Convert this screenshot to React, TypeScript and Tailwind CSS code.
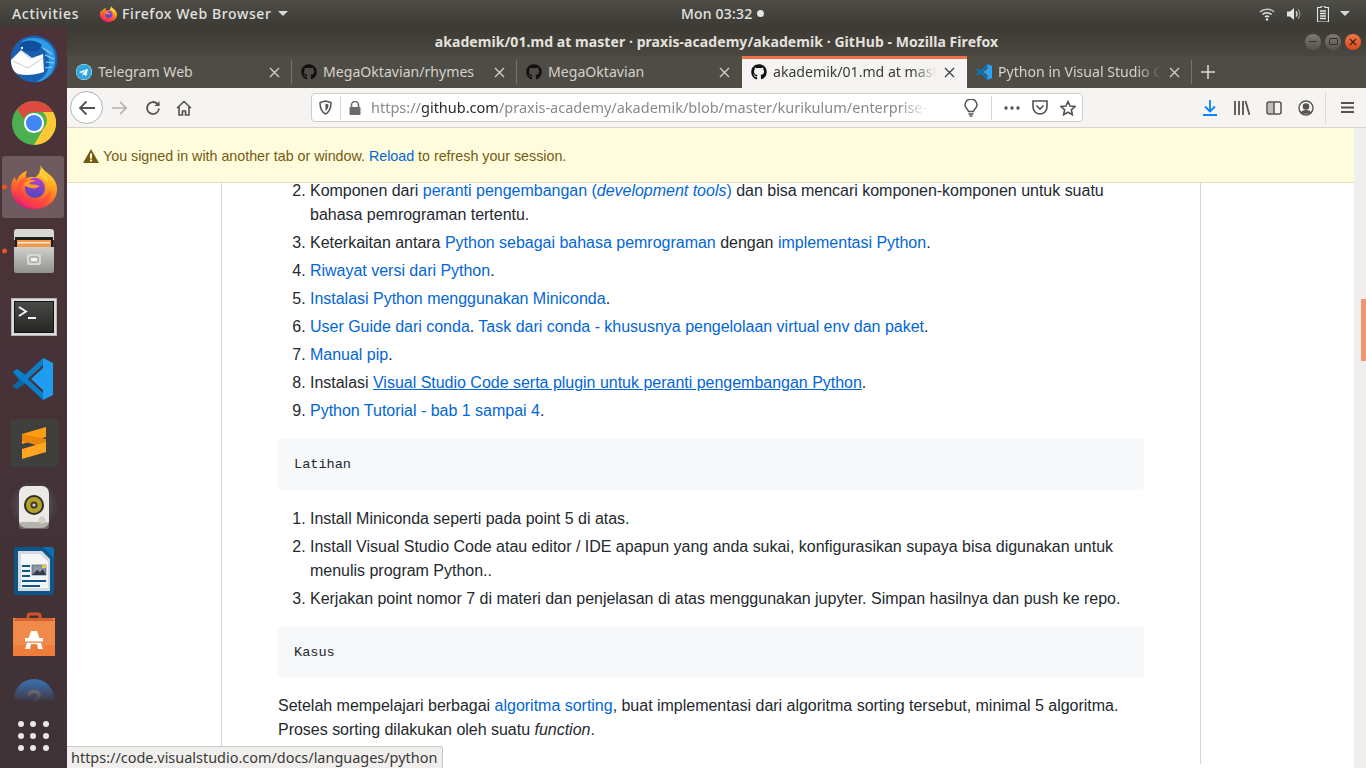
import { FaGithub, FaTelegram } from "react-icons/fa";

const uiFont = "font-['Noto_Sans',sans-serif]";
const link = "text-[#0366d6]";

function FirefoxLogo({ size }: { size: number }) {
  const id = `ff${size}`;
  return (
    <svg width={size} height={size} viewBox="0 0 48 48">
      <defs>
        <linearGradient id={`${id}a`} x1="0.8" y1="0" x2="0.35" y2="1">
          <stop offset="0" stopColor="#fff044" />
          <stop offset="0.4" stopColor="#ffa51f" />
          <stop offset="0.72" stopColor="#ff5a2e" />
          <stop offset="1" stopColor="#e6127f" />
        </linearGradient>
        <linearGradient id={`${id}b`} x1="0.5" y1="0" x2="0.4" y2="1">
          <stop offset="0" stopColor="#b13fd0" />
          <stop offset="1" stopColor="#4f46c0" />
        </linearGradient>
      </defs>
      <path
        d="M30 0c1 5 5 8 10 12 5 4 8 9 8 15 0 12-10 21-24 21C11 48 0 39 0 26c0-5 2-9 4-12 0 2 1 4 2 5 1-5 5-9 11-11-2 3-2 6-1 8 2-1 5-2 9-1 6-4 7-9 5-15z"
        fill={`url(#${id}a)`}
      />
      <path d="M7 23c1-5 5-8 11-9-2 3-1 5 0 7-4 0-6 2-7 5 2 9 9 14 17 13 7-1 12-6 13-12 2 9-6 20-17 20C13 47 5 35 7 23z" fill="#ff3f4a" opacity="0.55" />
      <circle cx="25" cy="26" r="10.5" fill={`url(#${id}b)`} />
      <path d="M13 22c3-4 8-6 13-3-4 0-6 1-7 3 3 1 7 0 11 2-3 2-6 3-9 2-3 0-6-2-8-4z" fill="#ff9a1f" />
      <path d="M30 7c4 3 9 8 9 15-2-5-5-7-9-9z" fill="#ffd53a" />
    </svg>
  );
}

function DockThunderbird() {
  return (
    <svg width="48" height="48" viewBox="0 0 48 48">
      <circle cx="24" cy="24" r="23.500" fill="#1a5fb0" />
      <path d="M11 7c8-7 25-6 32 7 5 10 2 24-8 30-2 1-6 3-9 3 8-4 13-10 13-20 0-6-3-12-9-15-6-3-13-2-19-5z" fill="#2f9be4" />
      <path d="M33 13l9 6M35 20l9 4M36 27l8 1M35 33l7-1" stroke="#8fd0f5" strokeWidth="1.100" />
      <path d="M11 8c6-4 15-3 21 2l-4 6-15 0c-3-2-4-5-2-8z" fill="#0f4f9c" />
      <circle cx="12" cy="13" r="1.200" fill="#dff" />
      <path d="M1 25 11 15l11 8 11-4 1 18c-9 3-18 4-26 2-5-2-7-8-7-14z" fill="#ffffff" />
      <path d="M3 26l15 7 15-10" fill="none" stroke="#b9bfc7" strokeWidth="0.800" />
      <path d="M11 16l10 8" fill="none" stroke="#b9bfc7" strokeWidth="0.800" />
    </svg>
  );
}

function DockChrome() {
  return (
    <svg width="44" height="44" viewBox="0 0 48 48">
      <circle cx="24" cy="24" r="24" fill="#4caf50" />
      <path d="M24 0a24 24 0 0 1 20.800 12H24a12 12 0 0 0-11.200 7.700L5.600 8.600A24 24 0 0 1 24 0z" fill="#dd4b3e" />
      <path d="M44.800 12A24 24 0 0 1 24 48l10.400-18a12 12 0 0 0-1-18z" fill="#fcc934" />
      <circle cx="24" cy="24" r="11" fill="#fff" />
      <circle cx="24" cy="24" r="8.800" fill="#4285f4" />
    </svg>
  );
}

function DockFiles() {
  return (
    <svg width="42" height="44" viewBox="0 0 42 44">
      <defs>
        <linearGradient id="cabinet" x1="0" y1="0" x2="0" y2="1">
          <stop offset="0" stopColor="#cfcfcd" />
          <stop offset="1" stopColor="#929290" />
        </linearGradient>
      </defs>
      <path d="M1 3q0-3 3-3h34q3 0 3 3v8H1z" fill="#d8d8d6" />
      <rect x="2" y="8" width="38" height="11" fill="#211e1b" />
      <rect x="4" y="11" width="34" height="8" fill="#ef9a4e" />
      <rect x="5" y="13" width="32" height="1.500" fill="#fbe6c8" />
      <path d="M1 18h40v24q0 2-2 2H3q-2 0-2-2z" fill="url(#cabinet)" />
      <rect x="14" y="25" width="14" height="11" rx="2" fill="#d7d7d5" />
      <rect x="17" y="28" width="8" height="5" rx="0.500" fill="#f4f4f2" stroke="#6e6e6c" strokeWidth="0.800" />
    </svg>
  );
}

function DockTerminal() {
  return (
    <svg width="46" height="38" viewBox="0 0 46 38">
      <defs>
        <linearGradient id="termbg" x1="0" y1="0" x2="0" y2="1">
          <stop offset="0" stopColor="#4a4a48" />
          <stop offset="1" stopColor="#262624" />
        </linearGradient>
      </defs>
      <rect x="0.500" y="0.500" width="45" height="37" fill="#dcdcda" stroke="#b5b5b3" />
      <rect x="3.500" y="3.500" width="39" height="31" fill="url(#termbg)" stroke="#111" />
      <path d="M8 9l7 4.500-7 4.500" fill="none" stroke="#f2f2f2" strokeWidth="2" />
      <rect x="17" y="19" width="8" height="2" fill="#f2f2f2" />
    </svg>
  );
}

function DockVsCode() {
  return (
    <svg width="44" height="44" viewBox="0 0 44 44">
      <path d="M1 15 5 12l9 6-6 6z" fill="#0e75b8" />
      <path d="M1 29l4 3L31 8V1z" fill="#0e7ec6" />
      <path d="M1 29l4 3 9-6-6-4z" fill="#0b68a8" />
      <path d="M5 12l26 24v7L1 15z" fill="#0a80cc" />
      <path d="M31 1v10L19 22l12 11v10l10-5V6z" fill="#1f9cf0" />
    </svg>
  );
}

function DockSublime() {
  return (
    <div className="flex h-12 w-12 items-center justify-center rounded-[3px] bg-[#3f3f3d]">
      <svg width="24" height="32" viewBox="0 0 24 32">
        <path d="M24 0v10L0 17V7z" fill="#ff9d12" />
        <path d="M0 14l24 7v-9L0 7z" fill="#e8860d" />
        <path d="M24 15v10L0 32V22z" fill="#ffa51f" />
      </svg>
    </div>
  );
}

function DockRhythmbox() {
  return (
    <svg width="48" height="48" viewBox="0 0 48 48">
      <circle cx="24" cy="22" r="23" fill="#6f86a8" opacity="0.1" />
      <circle cx="24" cy="22" r="19" fill="#6f86a8" opacity="0.14" />
      <rect x="9" y="3" width="30" height="42" rx="7" fill="#eceae4" />
      <rect x="9" y="39" width="30" height="7" rx="3" fill="#8f8d87" opacity="0.6" />
      <circle cx="24" cy="22" r="10" fill="#2f2d28" />
      <circle cx="24" cy="22" r="8" fill="#b4a12a" />
      <circle cx="24" cy="22" r="3.500" fill="#3b372c" />
      <circle cx="24" cy="22" r="1.600" fill="#d8d6cc" />
      <circle cx="32" cy="37" r="3.500" fill="#d2d0ca" />
    </svg>
  );
}

function DockWriter() {
  return (
    <svg width="40" height="48" viewBox="0 0 40 48">
      <path d="M3 0h26l11 11v33q0 4-4 4H3q-3 0-3-4V3q0-3 3-3z" fill="#0c5689" />
      <path d="M29 0h8q3 0 3 3v9z" fill="#0f6eb0" />
      <path d="M4 4h24l8 8v32H4z" fill="#d5d9dd" />
      <path d="M7 7h19l8 8v26H7z" fill="#f5f6f7" />
      <rect x="8" y="18" width="8" height="2" fill="#0c5689" />
      <rect x="8" y="23" width="8" height="2" fill="#0c5689" />
      <rect x="8" y="28" width="8" height="2" fill="#0c5689" />
      <rect x="8" y="33" width="24" height="2" fill="#0c5689" />
      <rect x="8" y="38" width="18" height="2" fill="#0c5689" />
      <rect x="18" y="18" width="14" height="10" fill="#8d99a5" stroke="#3b4c5c" strokeWidth="0.600" />
      <path d="M18 28l5-5 3 2 3-3 3 6z" fill="#2f3d4c" />
      <rect x="28" y="18" width="4" height="3" fill="#e5c84a" />
    </svg>
  );
}

function DockSoftware() {
  return (
    <svg width="42" height="44" viewBox="0 0 42 44">
      <path d="M15 9V4q0-2 2-2h8q2 0 2 2v5" fill="none" stroke="#d2552a" strokeWidth="3" />
      <rect x="0" y="6" width="42" height="38" fill="#f08a4b" />
      <path d="M3 6h36l3 3H0z" fill="#d9622e" />
      <rect x="0" y="33" width="42" height="11" fill="#ef7c3a" />
      <path d="M18 19h6l6 18h-5l-1-5h-6l-1 5h-5z" fill="#fff" />
      <rect x="12" y="26" width="18" height="3.500" fill="#fff" />
      <rect x="14" y="29.500" width="14" height="1.200" fill="#ef7c3a" />
    </svg>
  );
}

function DockHelp() {
  return (
    <svg width="40" height="40" viewBox="0 0 40 40">
      <circle cx="20" cy="20" r="20" fill="#2f5587" />
      <path d="M0 20a20 20 0 0 1 40 0z" fill="#3b6aa4" />
      <text x="20" y="30" textAnchor="middle" fontSize="28" fontWeight="700" fontFamily="Liberation Sans" fill="#8e929c">?</text>
    </svg>
  );
}

function Dock() {
  const icons = [
    { el: <DockThunderbird />, shift: "" },
    { el: <DockChrome />, shift: "" },
    { el: <FirefoxLogo size={46} />, active: true, shift: "-mt-[2px]" },
    { el: <DockFiles />, running: true, shift: "-mt-[1px]" },
    { el: <DockTerminal />, shift: "mt-[4px]" },
    { el: <DockVsCode />, shift: "" },
    { el: <DockSublime />, shift: "" },
    { el: <DockRhythmbox />, shift: "" },
    { el: <DockWriter />, shift: "" },
    { el: <DockSoftware />, shift: "-mt-[2px]" },
    { el: <DockHelp />, shift: "" },
  ];
  return (
    <aside className="flex w-[67px] shrink-0 flex-col bg-gradient-to-b from-[#4d3339] to-[#3e3236]">
      <div className="h-[676px] overflow-hidden [mask-image:linear-gradient(to_bottom,black_97%,transparent)]">
        {icons.map((it, i) => (
          <div key={i} className="relative flex h-[64px] items-center justify-center">
            {it.active && <div className="absolute left-[2px] right-[3px] top-[1px] bottom-[1px] rounded-[3px] bg-[#6f5a5f]" />}
            {(it.active || it.running) && (
              <div className="absolute left-[2px] top-1/2 h-[5px] w-[5px] -translate-y-1/2 rounded-full bg-[#e95420]" />
            )}
            <div className={`relative flex ${it.shift}`}>{it.el}</div>
          </div>
        ))}
      </div>
      <div className="grid flex-1 grid-cols-3 content-center justify-items-center gap-y-[6px] px-[15px]">
        {Array.from({ length: 9 }).map((_, i) => (
          <span key={i} className="h-[6px] w-[6px] rounded-full bg-[#e8e6e6]" />
        ))}
      </div>
    </aside>
  );
}

function TopBar() {
  return (
    <header className={`flex h-[27px] shrink-0 items-center bg-gradient-to-b from-[#4f4d47] to-[#3c3a35] text-[14px] font-medium text-[#e2e3e0] ${uiFont}`}>
      <div className="flex w-[526px] items-center">
        <span className="ml-[12px] w-[88px] tracking-[0.7px]">Activities</span>
        <FirefoxLogo size={17} />
        <span className="ml-[5px] tracking-[0.62px]">Firefox Web Browser</span>
        <svg className="ml-[6px]" width="10" height="5" viewBox="0 0 10 5"><path d="M0 0h10L5 5z" fill="#d8d8d4" /></svg>
      </div>
      <div className="ml-[155px] flex items-center">
        <span className="tracking-[0.2px]">Mon 03:32</span>
        <span className="ml-[5px] h-[7px] w-[7px] rounded-full bg-[#e4e4e0]" />
      </div>
      <div className="ml-auto mr-[16px] flex items-center">
        <svg width="16" height="14" viewBox="0 0 16 14" fill="none" stroke="#e4e4e0" strokeWidth="1.500">
          <path d="M1 5a10 10 0 0 1 14 0" opacity="0.8" />
          <path d="M3.500 7.500a6.500 6.500 0 0 1 9 0" />
          <path d="M6 10a3 3 0 0 1 4 0" />
          <circle cx="8" cy="12.500" r="1.200" fill="#e4e4e0" stroke="none" />
        </svg>
        <svg className="ml-[12px]" width="16" height="14" viewBox="0 0 16 14" fill="none">
          <path d="M0 4.500h3L7 1v12L3 9.500H0z" fill="#e4e4e0" />
          <path d="M9 4.500a3.500 3.500 0 0 1 0 5" stroke="#e4e4e0" strokeWidth="1.300" />
          <path d="M11 2.500a6.500 6.500 0 0 1 0 9" stroke="#8f8d87" strokeWidth="1.300" />
        </svg>
        <svg className="ml-[14px]" width="12" height="16" viewBox="0 0 12 16" fill="none">
          <path d="M4 0h4v1.500h3.500V16H.5V1.500H4z" fill="none" stroke="#e4e4e0" strokeWidth="1.200" />
          <path d="M3 5h6M3 7.500h6M3 10h6M3 12.500h6" stroke="#e4e4e0" strokeWidth="1.300" />
        </svg>
        <svg className="ml-[11px]" width="10" height="5" viewBox="0 0 10 5"><path d="M0 0h10L5 5z" fill="#d8d8d4" /></svg>
      </div>
    </header>
  );
}

function TitleBar() {
  return (
    <div className={`flex h-[29px] shrink-0 items-center bg-gradient-to-b from-[#3d3a35] to-[#4a4740] text-[14px] font-bold text-[#e4e2dd] ${uiFont}`}>
      <div className="flex-1 pl-[61px] text-center tracking-[0.065px]">akademik/01.md at master · praxis-academy/akademik · GitHub - Mozilla Firefox</div>
      <div className="mr-[5px] flex items-center gap-[4px]">
        <span className="flex h-[16px] w-[16px] items-center justify-center rounded-full bg-gradient-to-b from-[#7d7b75] to-[#55534d]">
          <span className="h-[1px] w-[8px] bg-[#35332f]" />
        </span>
        <span className="flex h-[16px] w-[16px] items-center justify-center rounded-full bg-gradient-to-b from-[#7d7b75] to-[#55534d]">
          <span className="h-[7px] w-[9px] rounded-[1px] border border-[#35332f]" />
        </span>
        <span className="flex h-[16px] w-[16px] items-center justify-center rounded-full bg-gradient-to-b from-[#f0764a] to-[#d9481c] text-[#3a2015]">
          <svg width="8" height="8" viewBox="0 0 8 8"><path d="M1 1l6 6M7 1L1 7" stroke="#3a2015" strokeWidth="1.200" /></svg>
        </span>
      </div>
    </div>
  );
}

function VsCodeTab() {
  return (
    <svg width="16" height="16" viewBox="0 0 16 16">
      <path d="M0 5.500 1.500 4.500l10 8.500V16z" fill="#0a78c8" />
      <path d="M0 10.500l1.500 1L11.500 3V0z" fill="#0a78c8" />
      <path d="M11.500 0 16 2v12l-4.500 2V11L7 8l4.500-3z" fill="#2aa3f0" />
    </svg>
  );
}

const Close = ({ color = "#cfcdc8" }: { color?: string }) => (
  <svg width="11" height="11" viewBox="0 0 11 11"><path d="M1 1l9 9M10 1l-9 9" stroke={color} strokeWidth="1.400" /></svg>
);

function Tab({ icon, title, active, sep, fade }: { icon: React.ReactNode; title: string; active?: boolean; sep?: boolean; fade?: boolean }) {
  return (
    <div className={`relative flex h-full w-[225px] shrink-0 items-center pl-[9px] pr-[12px] ${active ? "border-t-[3px] border-[#f0714a] bg-[#f5f4f2] pb-[3px] text-[#3b3a37]" : "text-[#d4d2cc]"}`}>
      <span className="flex w-[16px] shrink-0">{icon}</span>
      <span
        className={`ml-[6px] flex-1 overflow-hidden whitespace-nowrap text-[14.1px] ${fade ? "[mask-image:linear-gradient(to_right,black_86%,transparent)]" : ""}`}
      >
        {title}
      </span>
      <span className="ml-[8px] flex"><Close color={active ? "#444" : "#cfcdc8"} /></span>
      {sep && <span className="absolute right-0 top-[4px] h-[24px] w-[1px] bg-[#75736c]" />}
    </div>
  );
}

function TabStrip() {
  const gh = <FaGithub size={16} color="#111" />;
  return (
    <div className={`flex h-[32px] shrink-0 items-stretch bg-[#4f4c45] pr-[4px] ${uiFont}`}>
      <Tab icon={<FaTelegram size={16} color="#2ea6e0" className="rounded-full bg-white" />} title="Telegram Web" sep />
      <Tab icon={gh} title="MegaOktavian/rhymes" sep />
      <Tab icon={gh} title="MegaOktavian" />
      <Tab icon={gh} title="akademik/01.md at master · praxis-academy" active fade />
      <Tab icon={<VsCodeTab />} title="Python in Visual Studio Code" sep fade />
      <svg className="ml-[9px] self-center" width="14" height="14" viewBox="0 0 14 14"><path d="M7 0v14M0 7h14" stroke="#dedcd7" strokeWidth="1.500" /></svg>
    </div>
  );
}

function Toolbar() {
  const c = "#55534f";
  return (
    <div className={`flex h-[40px] shrink-0 items-center border-b border-[#d6d3cd] bg-[#f5f4f2] pl-[3px] ${uiFont}`}>
      <div className="flex h-[33px] w-[33px] items-center justify-center rounded-full border border-[#b4b2ae] bg-white">
        <svg width="18" height="16" viewBox="0 0 18 16" fill="none" stroke={c} strokeWidth="1.800"><path d="M17 8H2M8.500 1.500 2 8l6.500 6.500" /></svg>
      </div>
      <svg className="ml-[8px]" width="17" height="16" viewBox="0 0 18 16" fill="none" stroke="#b5b3af" strokeWidth="1.800"><path d="M1 8h15M9.500 1.500 16 8l-6.500 6.500" /></svg>
      <svg className="ml-[17px]" width="16" height="16" viewBox="0 0 16 16" fill="none" stroke={c} strokeWidth="1.800"><path d="M14 8.500a6 6 0 1 1-1.600-4.600L14 5.500" /><path d="M14.500 1v5h-5" fill={c} stroke="none" /></svg>
      <svg className="ml-[15px]" width="16" height="16" viewBox="0 0 16 16" fill="none" stroke={c} strokeWidth="1.600"><path d="M1 8l7-6.500L15 8M3 6.500V15h3.500v-4h3v4H13V6.500" /></svg>
      <div className="ml-[119px] flex h-[29px] w-[772px] items-center rounded-[4px] border border-[#cfccc7] bg-white">
        <svg className="ml-[7px]" width="13" height="15" viewBox="0 0 13 15" fill="none" stroke={c} strokeWidth="1.500"><path d="M6.500 1 12 2.500c0 6-1.500 9.500-5.500 11.500C2.500 12 1 8.500 1 2.500z" /><path d="M6.500 3.500 9.500 4.500c0 3-1 5-3 6.500z" fill={c} stroke="none" /></svg>
        <span className="ml-[8px] h-[24px] w-[1px] bg-[#d8d6d2]" />
        <svg className="ml-[8px]" width="12" height="14" viewBox="0 0 12 14"><path d="M2.500 6V4a3.500 3.500 0 0 1 7 0v2" fill="none" stroke="#6d6b67" strokeWidth="1.600" /><rect x="0.500" y="6" width="11" height="8" rx="1" fill="#6d6b67" /></svg>
        <div className="ml-[10px] flex-1 overflow-hidden whitespace-nowrap text-[14.5px] text-[#8b8985] [mask-image:linear-gradient(to_right,black_95%,transparent)]">
          https://<span className="text-[#2b2a28]">github.com</span>/praxis-academy/akademik/blob/master/kurikulum/enterprise-python/01.md
        </div>
        <svg className="ml-[36px]" width="14" height="18" viewBox="0 0 14 18" fill="none" stroke={c} strokeWidth="1.500"><path d="M4.500 12.500C4 10 1 9 1 6a6 6 0 0 1 12 0c0 3-3 4-3.500 6.500z" /><path d="M4.500 15h5M5.500 17h3" /></svg>
        <span className="ml-[13px] h-[24px] w-[1px] bg-[#d8d6d2]" />
        <svg className="ml-[12px]" width="16" height="4" viewBox="0 0 16 4" fill={c}><circle cx="2" cy="2" r="1.700" /><circle cx="8" cy="2" r="1.700" /><circle cx="14" cy="2" r="1.700" /></svg>
        <svg className="ml-[12px]" width="16" height="15" viewBox="0 0 16 15" fill="none" stroke={c} strokeWidth="1.600"><path d="M1 1h14v6a7 7 0 0 1-14 0z" /><path d="M4.500 5.500 8 9l3.500-3.500" /></svg>
        <svg className="ml-[12px] mr-[6px]" width="16" height="16" viewBox="0 0 16 16" fill="none" stroke={c} strokeWidth="1.600"><path d="M8 1.500 10 6l5 .5-3.700 3.300 1.100 4.900L8 12.200l-4.400 2.500 1.100-4.900L1 6.500 6 6z" /></svg>
      </div>
      <svg className="ml-[120px]" width="14" height="16" viewBox="0 0 14 16" fill="none" stroke="#0a84ff" strokeWidth="1.800"><path d="M7 0v11M2 6.500 7 11.500l5-5M0 15h14" /></svg>
      <svg className="ml-[17px]" width="16" height="14" viewBox="0 0 16 14" fill="none" stroke={c} strokeWidth="1.800"><path d="M1 0v14M5 0v14M9 0v14M11.500 0 15.500 14" /></svg>
      <svg className="ml-[16px]" width="16" height="14" viewBox="0 0 16 14" fill="none" stroke={c} strokeWidth="1.500"><rect x="1" y="1" width="14" height="12" rx="2" /><path d="M8 1v12" /><path d="M2 2h6v10H2z" fill={c} stroke="none" opacity="0.35" /></svg>
      <svg className="ml-[16px]" width="16" height="16" viewBox="0 0 16 16" fill="none" stroke={c} strokeWidth="1.400"><circle cx="8" cy="8" r="7" /><circle cx="8" cy="6.500" r="2.600" fill={c} /><path d="M3.500 13c1-3 8-3 9 0z" fill={c} /></svg>
      <span className="ml-[11px] h-[32px] w-[1px] bg-[#dcdad5]" />
      <svg className="ml-[15px]" width="13" height="11" viewBox="0 0 13 11" stroke={c} strokeWidth="1.800"><path d="M0 1h13M0 5.500h13M0 10h13" /></svg>
    </div>
  );
}

function Page() {
  return (
    <div className="relative flex min-h-0 flex-1 bg-white font-['Liberation_Sans',Arial,sans-serif] text-[16px] leading-[24px] tracking-[-0.015px] text-[#24292e]">
      <div className="flex min-w-0 flex-1 flex-col">
        <div className="relative z-10 flex h-[55px] shrink-0 items-center border-b border-[#e4e0bd] bg-[#fffbdd] pl-[16px] pt-[2px] text-[14.31px] text-[#735c0f]">
          <svg width="16" height="14" viewBox="0 0 16 14"><path d="M8 0 16 14H0z" fill="#735c0f" /><rect x="7" y="4.500" width="2" height="5" fill="#fffbdd" /><rect x="7" y="10.500" width="2" height="2" fill="#fffbdd" /></svg>
          <span className="ml-[4px]">You signed in with another tab or window. <span className={link}>Reload</span> to refresh your session.</span>
        </div>
        <div className="min-h-0 flex-1 overflow-hidden">
          <article className="ml-[154px] h-full w-[980px] border-x border-[#d1d5da] px-[56px]">
            <ol start={2} className="-mt-[4.4px] list-decimal pl-8">
              <li>
                Komponen dari <span className={link}>peranti pengembangan (<em>development tools</em>)</span> dan bisa mencari komponen-komponen untuk suatu bahasa pemrograman tertentu.
              </li>
              <li className="mt-1">
                Keterkaitan antara <span className={link}>Python sebagai bahasa pemrograman</span> dengan <span className={link}>implementasi Python</span>.
              </li>
              <li className="mt-1"><span className={link}>Riwayat versi dari Python</span>.</li>
              <li className="mt-1"><span className={link}>Instalasi Python menggunakan Miniconda</span>.</li>
              <li className="mt-1">
                <span className={link}>User Guide dari conda</span>. <span className={link}>Task dari conda - khususnya pengelolaan virtual env dan paket</span>.
              </li>
              <li className="mt-1"><span className={link}>Manual pip</span>.</li>
              <li className="mt-1">
                Instalasi <span className={`${link} underline`}>Visual Studio Code serta plugin untuk peranti pengembangan Python</span>.
              </li>
              <li className="mt-1"><span className={link}>Python Tutorial - bab 1 sampai 4</span>.</li>
            </ol>
            <pre className="mt-4 rounded-[3px] bg-[#f6f8fa] p-4 font-['Liberation_Mono',monospace] text-[13.6px] leading-[1.45]">Latihan</pre>
            <ol className="mt-[16.3px] list-decimal pl-8">
              <li>Install Miniconda seperti pada point 5 di atas.</li>
              <li className="mt-1">Install Visual Studio Code atau editor / IDE apapun yang anda sukai, konfigurasikan supaya bisa digunakan untuk menulis program Python..</li>
              <li className="mt-1">Kerjakan point nomor 7 di materi dan penjelasan di atas menggunakan jupyter. Simpan hasilnya dan push ke repo.</li>
            </ol>
            <pre className="mt-[15.7px] rounded-[3px] bg-[#f6f8fa] px-4 pb-[15.6px] pt-[16.4px] font-['Liberation_Mono',monospace] text-[13.6px] leading-[1.45]">Kasus</pre>
            <p className="mt-4">
              Setelah mempelajari berbagai <span className={link}>algoritma sorting</span>, buat implementasi dari algoritma sorting tersebut, minimal 5 algoritma. Proses sorting dilakukan oleh suatu <em>function</em>.
            </p>
          </article>
        </div>
      </div>
      <div className="flex w-[12px] shrink-0 flex-col items-end bg-[#f0efed]">
        <div className="mt-[171px] h-[62px] w-[5px] bg-[#f19670]" />
      </div>
      <div className={`absolute bottom-0 left-0 z-10 flex h-[22px] w-[376px] items-center rounded-tr-[3px] border-r border-t border-[#c9c6c1] bg-[#f0efed] pl-[4px] pt-[2px] text-[14.45px] leading-none tracking-normal text-[#3a3936] ${uiFont}`}>
        https://code.visualstudio.com/docs/languages/python
      </div>
    </div>
  );
}

export default function App() {
  return (
    <div className="flex h-[768px] w-[1366px] flex-col overflow-hidden">
      <TopBar />
      <div className="flex min-h-0 flex-1">
        <Dock />
        <main className="flex min-w-0 flex-1 flex-col">
          <TitleBar />
          <TabStrip />
          <Toolbar />
          <Page />
        </main>
      </div>
    </div>
  );
}
